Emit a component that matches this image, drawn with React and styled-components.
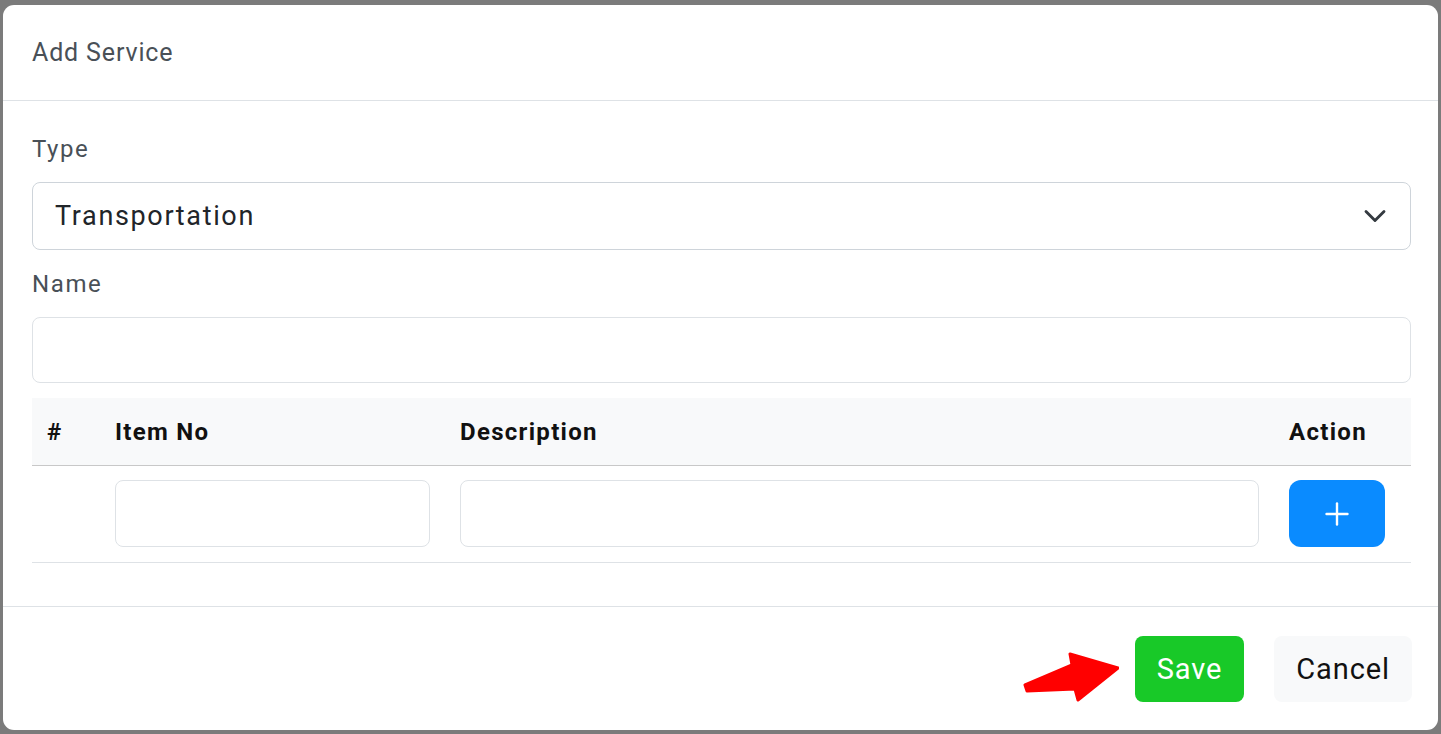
import React from "react";
import styled, { createGlobalStyle } from "styled-components";
import { ChevronDown, Plus } from "lucide-react";

const GlobalStyle = createGlobalStyle`
  html, body {
    margin: 0;
    padding: 0;
    background: #7b7b7b;
    font-family: Roboto, "Liberation Sans", Arial, sans-serif;
  }
  * { box-sizing: border-box; }
`;

const App = () => {
  return (
    <>
      <GlobalStyle />
      <Backdrop>
        <Modal>
          <Header>
            <Title>Add Service</Title>
          </Header>
          <Body>
            <Field>
              <Label>Type</Label>
              <Select>
                <span>Transportation</span>
                <ChevronDown size={36} strokeWidth={1.9} color="#343a40" />
              </Select>
            </Field>
            <Field>
              <Label>Name</Label>
              <Input />
            </Field>
            <Table>
              <HeadRow>
                <HeadCell>#</HeadCell>
                <HeadCell>Item No</HeadCell>
                <HeadCell>Description</HeadCell>
                <HeadCell>Action</HeadCell>
              </HeadRow>
              <Row>
                <Cell />
                <Cell>
                  <CellInput />
                </Cell>
                <Cell>
                  <CellInput />
                </Cell>
                <Cell>
                  <AddButton>
                    <Plus size={36} strokeWidth={1.6} color="#fff" />
                  </AddButton>
                </Cell>
              </Row>
            </Table>
          </Body>
          <Footer>
            <Arrow viewBox="0 0 96 50" width="96" height="50">
              <path
                d="M2 33 L49 13 L47 2 L95 16 L55 48 L52 37 L4 39 Z"
                fill="#ff0000"
                stroke="#ff0000"
                strokeWidth="3"
                strokeLinejoin="round"
              />
            </Arrow>
            <SaveButton>Save</SaveButton>
            <CancelButton>Cancel</CancelButton>
          </Footer>
        </Modal>
      </Backdrop>
    </>
  );
};

const Backdrop = styled.div`
  width: 100vw;
  height: 734px;
  padding: 5px 3px 4px 3px;
`;

const Modal = styled.div`
  width: 1435px;
  height: 725px;
  background: #fff;
  border-radius: 11px;
  display: flex;
  flex-direction: column;
  overflow: hidden;
`;

const Header = styled.div`
  height: 96px;
  padding: 0 29px;
  display: flex;
  align-items: center;
  border-bottom: 1px solid #dee2e6;
`;

const Title = styled.h2`
  margin: 0;
  font-size: 25px;
  font-weight: 400;
  color: #495057;
  letter-spacing: 0.85px;
`;

const Body = styled.div`
  padding: 30px 27px 43px 29px;
  display: flex;
  flex-direction: column;
`;

const Field = styled.div`
  display: flex;
  flex-direction: column;
  margin-bottom: 16px;
`;

const Label = styled.label`
  font-size: 24px;
  line-height: 36px;
  color: #495057;
  letter-spacing: 1.6px;
  margin-bottom: 15px;
`;

const Select = styled.div`
  height: 68px;
  border: 1px solid #ced4da;
  border-radius: 8px;
  padding: 0 17px 0 22px;
  display: flex;
  align-items: center;
  justify-content: space-between;
  font-size: 27px;
  color: #212529;
  letter-spacing: 1.65px;
`;

const Input = styled.input`
  height: 66px;
  border: 1px solid #dee2e6;
  border-radius: 8px;
  outline: none;
  background: #fff;
`;

const Table = styled.div`
  display: flex;
  flex-direction: column;
  margin-top: -1px;
`;

const columns = "68px 345px 829px 137px";

const HeadRow = styled.div`
  display: grid;
  grid-template-columns: ${columns};
  height: 68px;
  align-items: center;
  background: #f8f9fa;
  border-bottom: 1px solid #c8c8c8;
`;

const HeadCell = styled.div`
  padding: 0 15px;
  font-size: 24px;
  font-weight: 700;
  color: #111;
  letter-spacing: 1.3px;
`;

const Row = styled.div`
  display: grid;
  grid-template-columns: ${columns};
  padding: 14px 0 15px;
  border-bottom: 1px solid #dee2e6;
`;

const Cell = styled.div`
  padding: 0 15px;
  display: flex;
  align-items: center;
`;

const CellInput = styled.input`
  width: 100%;
  height: 67px;
  border: 1px solid #dee2e6;
  border-radius: 8px;
  outline: none;
  background: #fff;
`;

const AddButton = styled.button`
  width: 96px;
  height: 67px;
  border: none;
  border-radius: 12px;
  background: #0a8bff;
  display: flex;
  align-items: center;
  justify-content: center;
  cursor: pointer;
`;

const Footer = styled.div`
  flex: 1;
  border-top: 1px solid #dee2e6;
  display: flex;
  align-items: center;
  justify-content: flex-end;
  padding: 0 26px 0 29px;
  gap: 30px;
`;

const Arrow = styled.svg`
  margin-right: -14px;
  margin-top: 16px;
`;

const FooterButton = styled.button`
  height: 66px;
  padding: 0 22px;
  border: none;
  border-radius: 8px;
  font-family: Roboto, "Liberation Sans", Arial, sans-serif;
  font-size: 29px;
  letter-spacing: 0.9px;
  cursor: pointer;
`;

const SaveButton = styled(FooterButton)`
  background: #18c928;
  color: #fff;
`;

const CancelButton = styled(FooterButton)`
  background: #f8f9fa;
  color: #111;
`;

export default App;
